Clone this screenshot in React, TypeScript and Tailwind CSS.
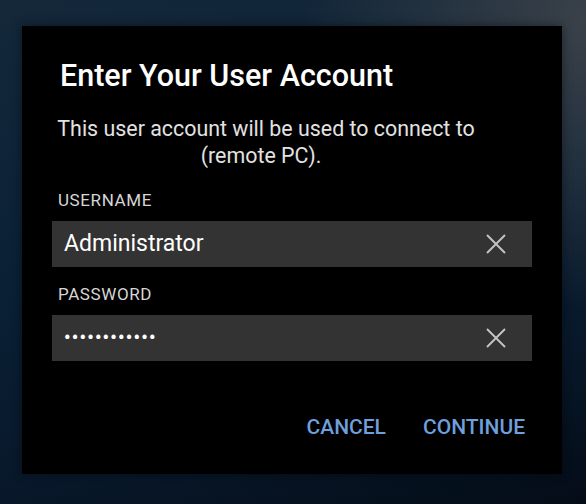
function ClearIcon() {
  return (
    <svg width="22" height="22" viewBox="0 0 22 22" className="shrink-0 text-[#c4c4c4]">
      <path d="M2 2 L20 20 M20 2 L2 20" stroke="currentColor" strokeWidth="1.9" fill="none" />
    </svg>
  );
}

function Field({ label, children }: { label: string; children: React.ReactNode }) {
  return (
    <div className="flex flex-col">
      <span className="ml-[6px] text-[17px] leading-[20px] tracking-[0.6px] text-[#d6d6d6]">{label}</span>
      <div className="mt-[11px] flex h-[46px] items-center justify-between bg-[#333333] pl-[12px] pr-[25px]">
        {children}
        <ClearIcon />
      </div>
    </div>
  );
}

export default function App() {
  return (
    <div
      className="flex h-[504px] w-[586px] items-start bg-[radial-gradient(circle_at_100%_4%,#3a4149_0%,rgba(20,35,50,0)_38%),linear-gradient(165deg,#14283a_0%,#0a2035_45%,#08182a_75%,#040c17_100%)] pt-[26px] pl-[22px]"
      style={{ fontFamily: 'Roboto, "Noto Sans", sans-serif' }}
    >
      <div className="flex h-[448px] w-[540px] flex-col bg-black px-[30px] shadow-[0_0_10px_rgba(0,0,0,0.45)]">
        <h1 className="mt-[32px] ml-[8px] text-[30.5px] leading-[36px] font-medium text-white">
          Enter Your User Account
        </h1>
        <div className="mt-[21px] ml-[6px] flex w-[416px] flex-col items-center text-[21.4px] leading-[27px] whitespace-nowrap text-[#e2e2e2]">
          <span>This user account will be used to connect to</span>
          <span className="mr-[10px]">(remote PC).</span>
        </div>
        <div className="mt-[21px] flex flex-col gap-[17px]">
          <Field label="USERNAME">
            <span className="text-[23px] leading-[28px] text-white">Administrator</span>
          </Field>
          <Field label="PASSWORD">
            <span className="text-[18px] leading-[28px] font-bold tracking-[1.25px] text-white">••••••••••••</span>
          </Field>
        </div>
        <div className="mt-[54px] flex justify-end gap-[37px] pr-[7px]">
          <button type="button" className="text-[21px] leading-[24px] font-medium text-[#6f9fdc]">
            CANCEL
          </button>
          <button type="button" className="text-[21px] leading-[24px] font-medium text-[#6f9fdc]">
            CONTINUE
          </button>
        </div>
      </div>
    </div>
  );
}
